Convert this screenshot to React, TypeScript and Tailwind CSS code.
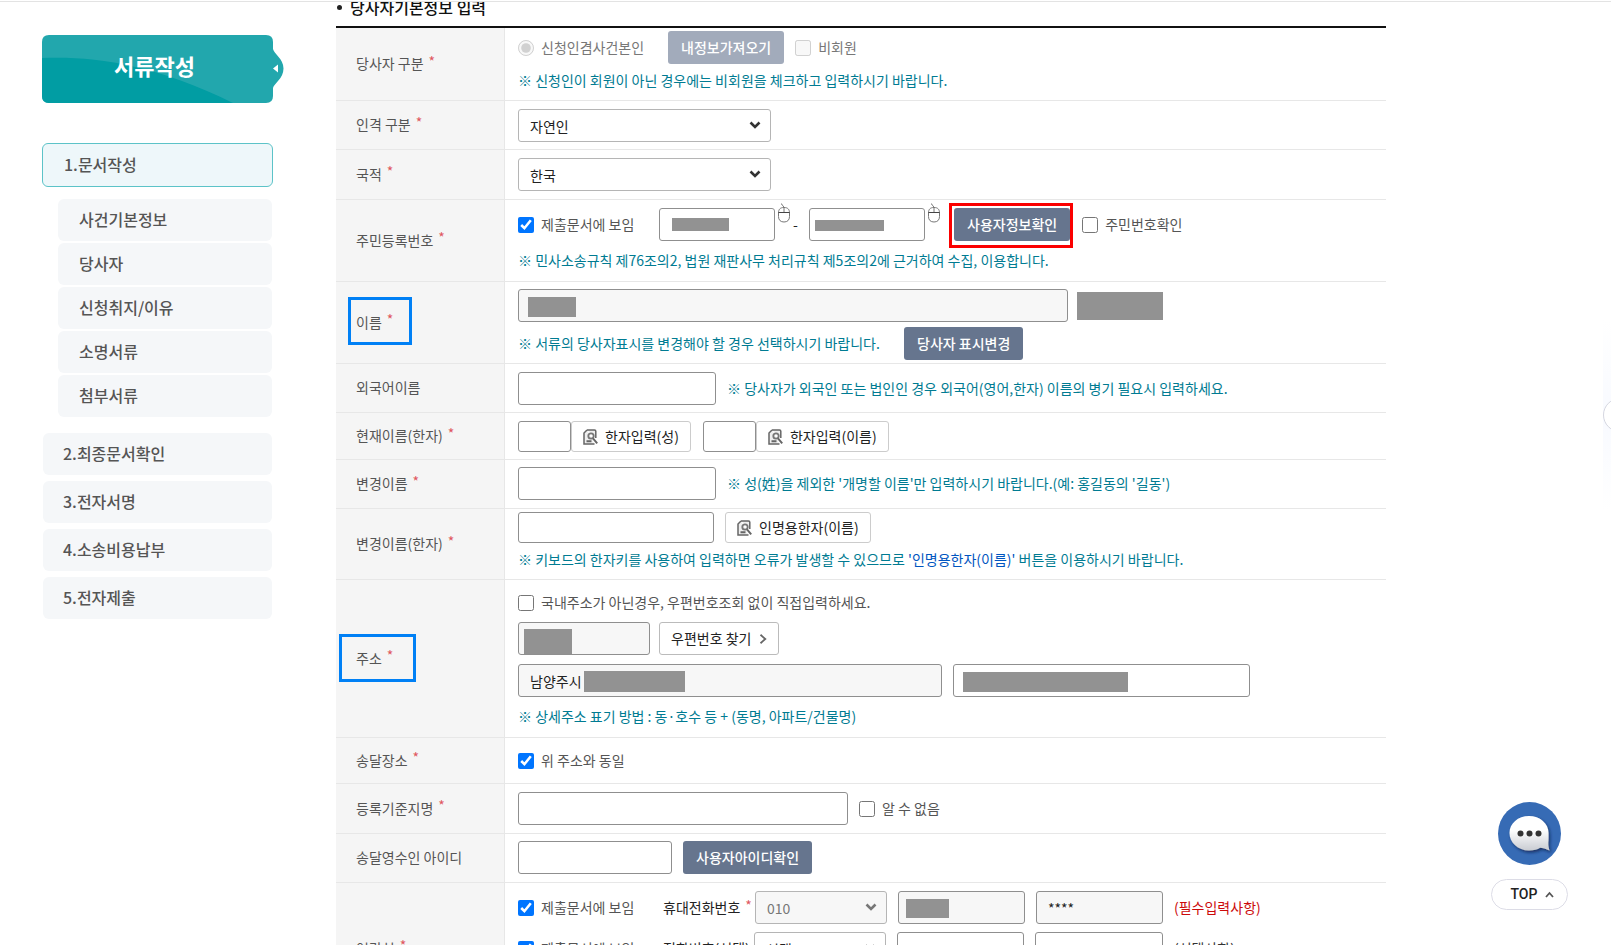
import type { ReactNode } from 'react';

const fieldBase = 'w-full rounded-[3px] border px-[11px] text-sm text-[#222] outline-none';

function Mask({ className }: { className: string }) {
  return <span aria-hidden="true" className={`absolute bg-[#929292] ${className}`} />;
}

function TextField({
  label,
  width,
  short = false,
  muted = false,
  value = '',
  children,
}: {
  label: string;
  width: string;
  short?: boolean;
  muted?: boolean;
  value?: string;
  children?: ReactNode;
}) {
  return (
    <span className={`relative block shrink-0 ${width}`}>
      <input
        type="text"
        aria-label={label}
        defaultValue={value}
        readOnly={muted}
        className={`${fieldBase} block border-[#8f8f8f] ${short ? 'h-[31px]' : 'h-[33px]'} ${muted ? 'bg-[#f7f7f7]' : 'bg-white'}`}
      />
      {children}
    </span>
  );
}

function Select({
  label,
  width,
  options,
  disabled = false,
}: {
  label: string;
  width: string;
  options: string[];
  disabled?: boolean;
}) {
  return (
    <span className={`relative block shrink-0 ${width}`}>
      <select
        aria-label={label}
        disabled={disabled}
        className={`${fieldBase} block h-[33px] appearance-none border-[#b5b5b5] ${disabled ? 'bg-[#f7f7f7] text-[#777]' : 'bg-white'}`}
      >
        {options.map((o) => (
          <option key={o}>{o}</option>
        ))}
      </select>
      <svg
        viewBox="0 0 12 8"
        className={`pointer-events-none absolute top-3 right-2.5 h-2 w-3 ${disabled ? 'text-[#777]' : 'text-[#333]'}`}
      >
        <path d="M1.5 1.5 6 6l4.500-4.500" fill="none" stroke="currentColor" strokeWidth="2.600" />
      </svg>
    </span>
  );
}

function Check({
  label,
  checked = false,
  disabled = false,
  width = '',
}: {
  label: string;
  checked?: boolean;
  disabled?: boolean;
  width?: string;
}) {
  return (
    <label className={`flex shrink-0 items-center gap-[7px] ${width} ${disabled ? 'text-[#777]' : 'text-[#555]'}`}>
      <input type="checkbox" defaultChecked={checked} disabled={disabled} className="size-4" />
      {label}
    </label>
  );
}

function SolidButton({ children, disabled = false }: { children: ReactNode; disabled?: boolean }) {
  return (
    <button
      type="button"
      disabled={disabled}
      className={`h-[33px] shrink-0 rounded-[3px] px-[13px] font-medium text-white ${disabled ? 'bg-[#a2abbb]' : 'bg-[#66758e]'}`}
    >
      {children}
    </button>
  );
}

function HanjaButton({ children }: { children: ReactNode }) {
  return (
    <button
      type="button"
      className="flex h-[31px] shrink-0 items-center gap-[7px] rounded-[3px] border border-[#ccc] bg-white px-[11px] text-[#222]"
    >
      <svg viewBox="0 0 15 16" className="h-4 w-[15px]" fill="none" stroke="#666" strokeWidth="1.500">
        <path d="M4 1h7.500c.8 0 1.300.5 1.300 1.300V9M4 1 1 4v11h10.500" fill="#eee" />
        <circle cx="8" cy="7" r="2.700" stroke="#777" strokeWidth="1.800" />
        <path d="M3.500 12.300h5M10 9.300l4.200 5" strokeWidth="2" />
      </svg>
      {children}
    </button>
  );
}

function Mouse() {
  return (
    <svg viewBox="0 0 12 20" className="h-5 w-3 shrink-0" fill="none" stroke="#777" strokeWidth="1">
      <path d="M3 .8c2 .4 1 2.200 3 3.200v6" />
      <path d="M.5 10c0-3.500 1.500-5.500 5.500-5.500s5.500 2 5.500 5.500v3.500c0 3.500-2 5.500-5.500 5.500S.5 17 .5 13.500z" />
      <path d="M.5 9.500h11" stroke="#444" />
    </svg>
  );
}

function Note({ children, width = '' }: { children: ReactNode; width?: string }) {
  return <p className={`leading-[21px] text-[#007b92] ${width}`}>※ {children}</p>;
}

function Star() {
  return <span className="relative -top-[3px] ml-[5px] text-sm leading-none text-[#e0575e]">*</span>;
}

function Row({
  label,
  required = false,
  height,
  pad,
  outline,
  children,
}: {
  label: string;
  required?: boolean;
  height: string;
  pad: string;
  outline?: string;
  children: ReactNode;
}) {
  return (
    <div role="group" aria-label={label} className={`flex border-b border-[#e7e7e7] ${height}`}>
      <div className="relative flex w-[169px] shrink-0 items-center border-r border-[#e7e7e7] bg-[#f5f5f5] pb-px pl-5 text-[#555]">
        {label}
        {required && <Star />}
        {outline && <span aria-hidden="true" className={`absolute border-3 border-[#0080f5] ${outline}`} />}
      </div>
      <div className={`flex min-w-0 flex-1 flex-col pl-[13px] ${pad}`}>{children}</div>
    </div>
  );
}

function Line({ gap, children }: { gap: string; children: ReactNode }) {
  return <div className={`flex items-center ${gap}`}>{children}</div>;
}

const subItems = ['사건기본정보', '당사자', '신청취지/이유', '소명서류', '첨부서류'];
const steps = ['2.최종문서확인', '3.전자서명', '4.소송비용납부', '5.전자제출'];

function Sidebar() {
  return (
    <aside className="ml-[42px] w-[231px] shrink-0 pt-[33px] text-base font-medium text-[#555]">
      <div className="relative flex h-[68px] items-center justify-center">
        <svg viewBox="0 0 246 68" className="absolute top-0 left-0 h-[68px] w-[246px]">
          <path
            d="M7 0h217q7 0 7 7v7c1 5 10.500 9.500 10.500 19.500s-9.500 15-10.500 19.500v8q0 7-7 7H7q-7 0-7-7V7q0-7 7-7z"
            fill="#22a7ad"
          />
          <path d="M0 23c50-2 110 5 191 45H7q-7 0-7-7z" fill="#019da3" />
          <path d="M231 33.500l5-4v8z" fill="#fff" />
        </svg>
        <h2 className="relative pr-1.5 pb-2 text-[22px] leading-8 font-bold text-white">서류작성</h2>
      </div>
      <nav aria-label="서류작성" className="mt-10 flex flex-col">
        <a
          href="#step1"
          className="flex h-11 items-center rounded-md border border-[#5cc3c8] bg-[#eef7fa] pb-0.5 pl-[21px]"
        >
          1.문서작성
        </a>
        <ul className="mt-3 mr-px ml-4 flex flex-col gap-0.5">
          {subItems.map((t) => (
            <li key={t}>
              <a href="#sub" className="flex h-[42px] items-center rounded-md bg-[#f5f7f9] pb-[3px] pl-[21px]">
                {t}
              </a>
            </li>
          ))}
        </ul>
        <ul className="mx-px mt-4 flex flex-col gap-1.5">
          {steps.map((t) => (
            <li key={t}>
              <a href="#step" className="flex h-[42px] items-center rounded-md bg-[#f5f7f9] pb-0.5 pl-5">
                {t}
              </a>
            </li>
          ))}
        </ul>
      </nav>
    </aside>
  );
}

function PartyForm() {
  return (
    <form className="border-t-2 border-[#111]">
      <Row label="당사자 구분" required height="min-h-[73px]" pad="pt-[3px]">
        <Line gap="gap-[11px]">
          <label className="flex w-[139px] items-center gap-[7px] text-[#777]">
            <input type="radio" defaultChecked disabled className="size-4" />
            신청인겸사건본인
          </label>
          <SolidButton disabled>내정보가져오기</SolidButton>
          <Check label="비회원" disabled />
        </Line>
        <div className="mt-1.5">
          <Note>신청인이 회원이 아닌 경우에는 비회원을 체크하고 입력하시기 바랍니다.</Note>
        </div>
      </Row>
      <Row label="인격 구분" required height="min-h-[49px]" pad="pt-2">
        <Select label="인격 구분" width="w-[253px]" options={['자연인']} />
      </Row>
      <Row label="국적" required height="min-h-[50px]" pad="pt-2">
        <Select label="국적" width="w-[253px]" options={['한국']} />
      </Row>
      <Row label="주민등록번호" required height="min-h-[82px]" pad="pt-2">
        <Line gap="gap-0">
          <Check label="제출문서에 보임" checked width="w-[141px]" />
          <TextField label="주민등록번호 앞자리" width="w-[116px]">
            <Mask className="top-2.5 left-[13px] h-[13px] w-[57px]" />
          </TextField>
          <span className="-mt-6 ml-[3px]">
            <Mouse />
          </span>
          <span className="w-[19px] pl-[3px] text-[#222]">-</span>
          <TextField label="주민등록번호 뒷자리" width="w-[116px]">
            <Mask className="top-3 left-1.5 h-[11px] w-[69px]" />
          </TextField>
          <span className="-mt-6 mr-3.5 ml-[3px]">
            <Mouse />
          </span>
          <span className="relative mr-3 flex">
            <SolidButton>사용자정보확인</SolidButton>
            <span aria-hidden="true" className="absolute -top-[5px] -right-[3px] -bottom-[7px] -left-[5px] border-3 border-[#fb0000]" />
          </span>
          <Check label="주민번호확인" />
        </Line>
        <div className="mt-[9px]">
          <Note>민사소송규칙 제76조의2, 법원 재판사무 처리규칙 제5조의2에 근거하여 수집, 이용합니다.</Note>
        </div>
      </Row>
      <Row
        label="이름"
        required
        height="min-h-[82px]"
        pad="pt-[7px]"
        outline="top-[15px] left-3 h-[48px] w-16"
      >
        <Line gap="gap-[9px]">
          <TextField label="이름" width="w-[550px]" muted>
            <Mask className="top-2 left-2.5 h-5 w-12" />
          </TextField>
          <span aria-hidden="true" className="h-7 w-[86px] bg-[#929292]" />
        </Line>
        <div className="mt-[5px]">
          <Line gap="gap-[11px]">
            <Note width="w-[375px]">서류의 당사자표시를 변경해야 할 경우 선택하시기 바랍니다.</Note>
            <SolidButton>당사자 표시변경</SolidButton>
          </Line>
        </div>
      </Row>
      <Row label="외국어이름" height="min-h-[49px]" pad="pt-2">
        <Line gap="gap-[11px]">
          <TextField label="외국어이름" width="w-[198px]" />
          <Note>당사자가 외국인 또는 법인인 경우 외국어(영어,한자) 이름의 병기 필요시 입력하세요.</Note>
        </Line>
      </Row>
      <Row label="현재이름(한자)" required height="min-h-[47px]" pad="pt-2">
        <Line gap="gap-3">
          <div className="flex">
            <TextField label="현재이름 성(한자)" width="w-[53px]" short />
            <HanjaButton>한자입력(성)</HanjaButton>
          </div>
          <div className="flex">
            <TextField label="현재이름 이름(한자)" width="w-[53px]" short />
            <HanjaButton>한자입력(이름)</HanjaButton>
          </div>
        </Line>
      </Row>
      <Row label="변경이름" required height="min-h-[49px]" pad="pt-[7px]">
        <Line gap="gap-[11px]">
          <TextField label="변경이름" width="w-[198px]" />
          <Note>성(姓)을 제외한 '개명할 이름'만 입력하시기 바랍니다.(예: 홍길동의 '길동')</Note>
        </Line>
      </Row>
      <Row label="변경이름(한자)" required height="min-h-[71px]" pad="pt-[3px]">
        <Line gap="gap-[11px]">
          <TextField label="변경이름(한자)" width="w-[196px]" short />
          <HanjaButton>인명용한자(이름)</HanjaButton>
        </Line>
        <div className="mt-1.5">
          <Note>
            키보드의 한자키를 사용하여 입력하면 오류가 발생할 수 있으므로{' '}
            <span className="text-[#0055c0]">'인명용한자(이름)'</span> 버튼을 이용하시기 바랍니다.
          </Note>
        </div>
      </Row>
      <Row
        label="주소"
        required
        height="min-h-[158px]"
        pad="gap-[9px] pt-3"
        outline="top-[54px] left-[3px] h-[48px] w-[77px]"
      >
        <Check label="국내주소가 아닌경우, 우편번호조회 없이 직접입력하세요." />
        <Line gap="gap-[9px]">
          <TextField label="우편번호" width="w-[132px]" muted>
            <Mask className="top-[7px] left-1.5 h-[25px] w-12" />
          </TextField>
          <button
            type="button"
            className="flex h-[33px] items-center gap-2 rounded-[3px] border border-[#bbb] bg-white px-[11px] text-[#222]"
          >
            우편번호 찾기
            <svg viewBox="0 0 8 10" className="h-2.5 w-2" fill="none" stroke="#666" strokeWidth="1.800">
              <path d="M1.500 .8 6.300 5 1.500 9.200" />
            </svg>
          </button>
        </Line>
        <Line gap="gap-[11px]">
          <TextField label="주소" width="w-[424px]" muted value="남양주시">
            <Mask className="top-[7px] left-[66px] h-[21px] w-[101px]" />
          </TextField>
          <TextField label="상세주소" width="w-[297px]">
            <Mask className="top-2 left-2.5 h-5 w-[165px]" />
          </TextField>
        </Line>
        <Note>상세주소 표기 방법 : 동·호수 등 + (동명, 아파트/건물명)</Note>
      </Row>
      <Row label="송달장소" required height="min-h-[46px]" pad="justify-center">
        <Check label="위 주소와 동일" checked />
      </Row>
      <Row label="등록기준지명" required height="min-h-[50px]" pad="pt-2">
        <Line gap="gap-[11px]">
          <TextField label="등록기준지명" width="w-[330px]" />
          <Check label="알 수 없음" />
        </Line>
      </Row>
      <Row label="송달영수인 아이디" height="min-h-[49px]" pad="pt-[7px]">
        <Line gap="gap-[11px]">
          <TextField label="송달영수인 아이디" width="w-[154px]" />
          <SolidButton>사용자아이디확인</SolidButton>
        </Line>
      </Row>
      <Row label="연락처" required height="min-h-[132px]" pad="gap-2 pt-2">
        <Line gap="gap-[11px]">
          <Check label="제출문서에 보임" checked width="w-[134px]" />
          <span className="-mr-[11px] flex w-[92px] items-center whitespace-nowrap text-[#222]">
            휴대전화번호
            <Star />
          </span>
          <Select label="휴대전화번호 앞자리" width="w-[132px]" options={['010']} disabled />
          <TextField label="휴대전화번호 가운데자리" width="w-[127px]" muted>
            <Mask className="top-2 left-2 h-[19px] w-[43px]" />
          </TextField>
          <TextField label="휴대전화번호 끝자리" width="w-[127px]" muted value="****" />
          <span className="text-[#cc0a0a]">(필수입력사항)</span>
        </Line>
        <Line gap="gap-[11px]">
          <Check label="제출문서에 보임" checked width="w-[134px]" />
          <span className="-mr-[11px] w-[91px] whitespace-nowrap text-[#222]">전화번호(선택)</span>
          <Select label="전화번호 앞자리" width="w-[132px]" options={['선택']} />
          <TextField label="전화번호 가운데자리" width="w-[127px]" />
          <TextField label="전화번호 끝자리" width="w-[128px]" />
          <span className="text-[#333]">(선택사항)</span>
        </Line>
      </Row>
    </form>
  );
}

function FloatingTools() {
  return (
    <>
      <div className="fixed top-[320px] right-0 h-[190px] w-2 overflow-hidden bg-linear-to-b from-white via-[#f8faff] to-white">
        <button
          type="button"
          aria-label="퀵메뉴 열기"
          className="absolute top-[78px] left-0 size-[34px] rounded-full border border-[#d5d7e0] bg-white"
        />
      </div>
      <div className="fixed right-[43px] bottom-[35px] flex w-[77px] flex-col items-center gap-3.5">
        <button type="button" aria-label="채팅 상담" className="size-[63px]">
          <svg viewBox="0 0 63 63" className="size-full">
            <defs>
              <linearGradient id="bubble" x1="0" y1="0" x2="0" y2="1">
                <stop offset="0.400" stopColor="#fff" />
                <stop offset="1" stopColor="#c9ccd2" />
              </linearGradient>
              <filter id="shade" x="-20%" y="-20%" width="150%" height="150%">
                <feDropShadow dx="1.500" dy="2" stdDeviation="1.500" floodColor="#0b1f45" floodOpacity="0.700" />
              </filter>
            </defs>
            <circle cx="31.500" cy="31.500" r="31.500" fill="#366bb5" />
            <path
              d="M31 14c-11 0-19.500 7.500-19.500 17S20 48.500 31 48.500c5 0 8.500-1 11-2.700 2.500.2 6 1.200 9.500 2.700-.8-2.500-1.300-5-1.200-8 .4-3 .2-6 .2-9.500C50.500 21.500 42 14 31 14z"
              fill="url(#bubble)"
              filter="url(#shade)"
            />
            <circle cx="22.500" cy="31.500" r="3" fill="#333" />
            <circle cx="31.500" cy="31.500" r="3" fill="#333" />
            <circle cx="40.500" cy="31.500" r="3" fill="#333" />
          </svg>
        </button>
        <a
          href="#top"
          className="flex h-[31px] w-full items-center justify-center gap-2 rounded-full border border-[#dcdce6] bg-white pl-1.5 font-[Roboto,sans-serif] font-medium text-[#222]"
        >
          TOP
          <svg viewBox="0 0 9 7" className="h-[7px] w-[9px]" fill="none" stroke="#555" strokeWidth="1.800">
            <path d="M1 6l3.500-4L8 6" />
          </svg>
        </a>
      </div>
    </>
  );
}

export default function App() {
  return (
    <div
      id="top"
      className="flex h-screen flex-col overflow-hidden bg-white pt-px font-['Noto_Sans_CJK_KR',sans-serif] text-sm leading-[21px] text-[#222]"
    >
      <div className="flex min-h-0 flex-1 items-start overflow-hidden border-t border-[#e3e3e3]">
        <Sidebar />
        <main className="ml-[63px] max-w-[1050px] flex-1">
          <h3 className="-mt-[7px] flex items-center gap-2 pb-[7px] pl-px text-base leading-6 font-medium text-[#111]">
            <span className="size-[5px] rounded-full bg-[#222]" />
            당사자기본정보 입력
          </h3>
          <PartyForm />
        </main>
      </div>
      <FloatingTools />
    </div>
  );
}
